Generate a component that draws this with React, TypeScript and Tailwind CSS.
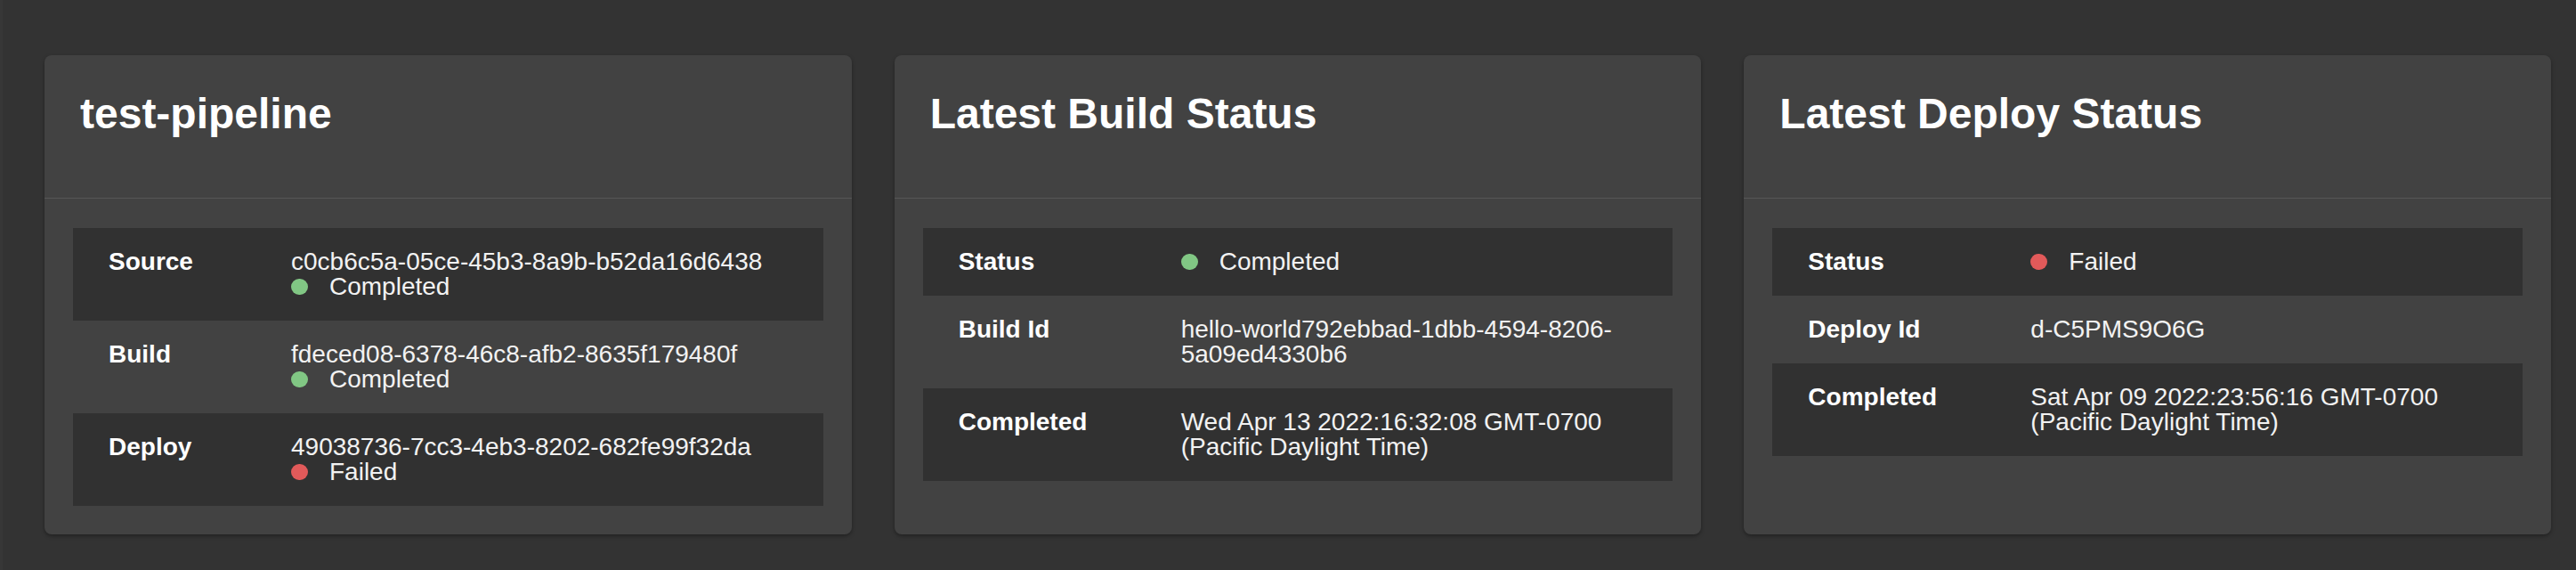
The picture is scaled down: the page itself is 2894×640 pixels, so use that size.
type Status = "Completed" | "Failed";

type Row = {
  label: string;
  value?: string;
  status?: Status;
};

type Card = {
  title: string;
  labelWidth: string;
  rows: Row[];
};

const cards: Card[] = [
  {
    title: "test-pipeline",
    labelWidth: "w-[245px]",
    rows: [
      { label: "Source", value: "c0cb6c5a-05ce-45b3-8a9b-b52da16d6438", status: "Completed" },
      { label: "Build", value: "fdeced08-6378-46c8-afb2-8635f179480f", status: "Completed" },
      { label: "Deploy", value: "49038736-7cc3-4eb3-8202-682fe99f32da", status: "Failed" },
    ],
  },
  {
    title: "Latest Build Status",
    labelWidth: "w-[290px]",
    rows: [
      { label: "Status", status: "Completed" },
      { label: "Build Id", value: "hello-world792ebbad-1dbb-4594-8206-5a09ed4330b6" },
      { label: "Completed", value: "Wed Apr 13 2022:16:32:08 GMT-0700 (Pacific Daylight Time)" },
    ],
  },
  {
    title: "Latest Deploy Status",
    labelWidth: "w-[290px]",
    rows: [
      { label: "Status", status: "Failed" },
      { label: "Deploy Id", value: "d-C5PMS9O6G" },
      { label: "Completed", value: "Sat Apr 09 2022:23:56:16 GMT-0700 (Pacific Daylight Time)" },
    ],
  },
];

function StatusLine({ status }: { status: Status }) {
  return (
    <div>
      <span
        className={
          status === "Completed"
            ? "inline-block w-[19px] h-[18px] rounded-full bg-[#81c784] mr-[24px]"
            : "inline-block w-[19px] h-[18px] rounded-full bg-[#e25a5a] mr-[24px]"
        }
      />
      {status}
    </div>
  );
}

function StatusCard({ card }: { card: Card }) {
  return (
    <div className="bg-[#424242] rounded-lg shadow-[0_2px_4px_rgba(0,0,0,0.35)] flex flex-col">
      {/* header */}
      <div className="h-[161px] border-b border-[#575757] pl-10 pt-[42px]">
        <h2 className="text-[48px] leading-none font-bold text-white">{card.title}</h2>
      </div>
      {/* rows */}
      <div className="px-8 pt-[33px] pb-8">
        {card.rows.map((row, i) => (
          <div
            key={row.label}
            className={
              i % 2 === 0
                ? "flex bg-[#313131] py-6 text-[28px] leading-[28px]"
                : "flex py-6 text-[28px] leading-[28px]"
            }
          >
            <div className={`${card.labelWidth} shrink-0 pl-10 font-bold text-white`}>{row.label}</div>
            <div className="flex-1 pr-10 text-[#f2f2f2]">
              {row.value && <div>{row.value}</div>}
              {row.status && <StatusLine status={row.status} />}
            </div>
          </div>
        ))}
      </div>
    </div>
  );
}

export default function App() {
  return (
    <div className="min-h-[640px] bg-[#333333] flex font-['Liberation_Sans',Arial,sans-serif]">
      <div className="w-[3px] shrink-0 bg-[#373737]" />
      <div className="flex-1 grid grid-cols-3 gap-[48px] pl-[47px] pr-[28px] pt-[62px] pb-10">
        {cards.map((card) => (
          <StatusCard key={card.title} card={card} />
        ))}
      </div>
    </div>
  );
}
